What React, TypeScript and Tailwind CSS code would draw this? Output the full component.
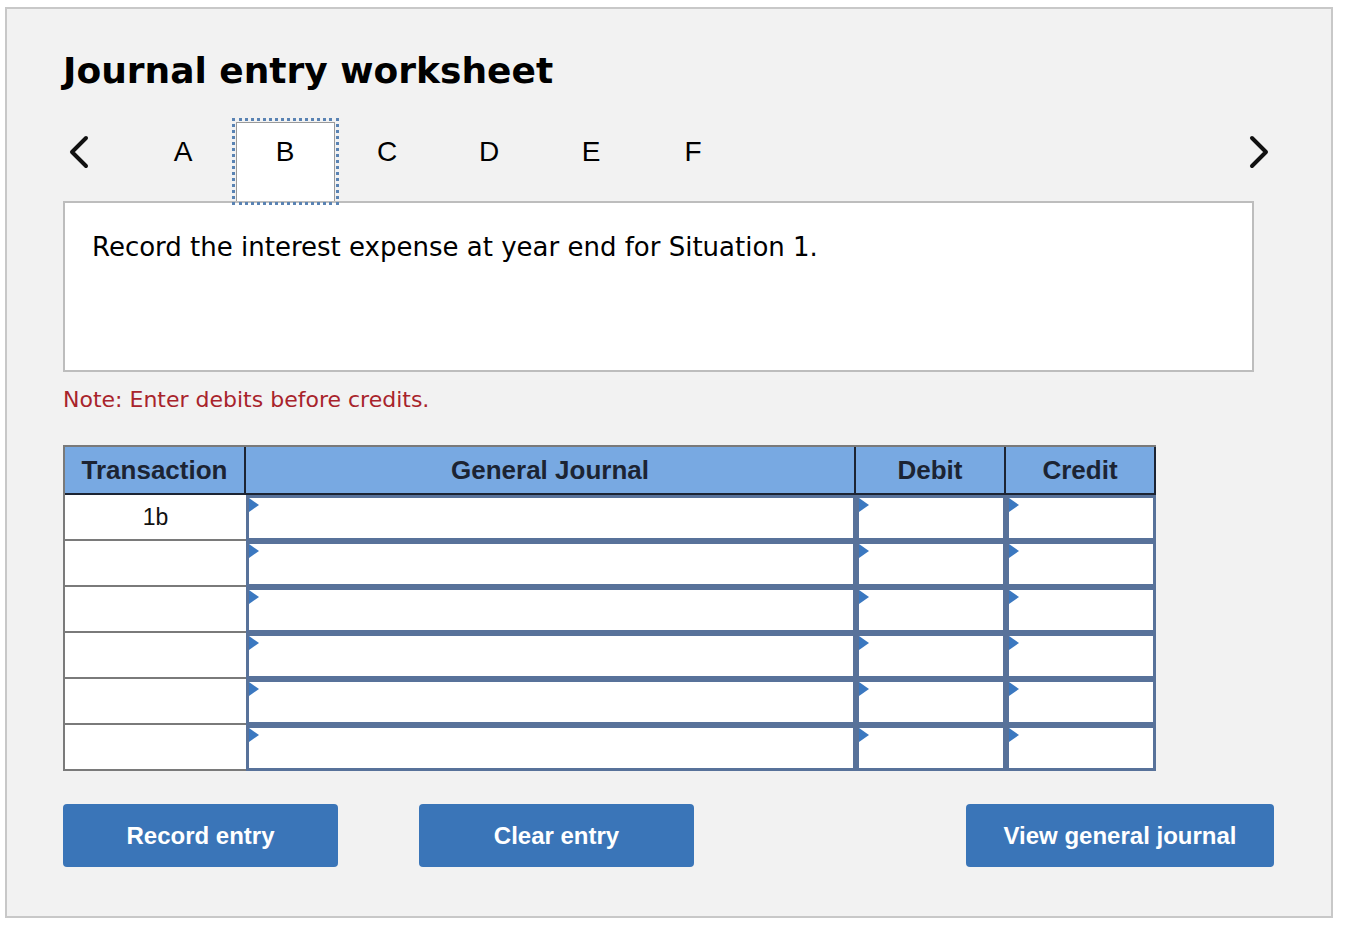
import React from 'react';

const tabs = ['A', 'B', 'C', 'D', 'E', 'F'];
const rows = ['1b', '', '', '', '', ''];

const Chevron: React.FC<{ dir: 'left' | 'right' }> = ({ dir }) => (
  <svg width="22" height="34" viewBox="0 0 22 34" fill="none">
    <polyline
      points={dir === 'left' ? '18,3 4,17 18,31' : '4,3 18,17 4,31'}
      stroke="#111"
      strokeWidth="4"
      strokeLinecap="round"
      strokeLinejoin="round"
    />
  </svg>
);

const InputCell: React.FC<{ w: string }> = ({ w }) => (
  <div className={`relative ${w} h-full border-[3px] border-[#58729a] bg-white`}>
    <svg className="absolute left-0 top-0" width="11" height="16" viewBox="0 0 11 16">
      <polygon points="0,0 10,7 0,14" fill="#3b78c0" />
    </svg>
  </div>
);

export default function App() {
  return (
    <div className="w-full h-[934px] bg-white pt-[7px] pl-[5px]">
      <div className="w-[1328px] h-[911px] border-2 border-[#c8c8c8] bg-[#f2f2f2] px-[56px]">
        <h1 className="pt-[40px] text-[36px] leading-[44px] font-bold text-black font-['DejaVu_Sans',sans-serif]">
          Journal entry worksheet
        </h1>

        {/* tab strip */}
        <div className="mt-[25px] flex items-start h-[87px] relative z-10 -mb-[4px]">
          <div className="w-[69px] h-[68px] flex items-center pl-[5px]">
            <Chevron dir="left" />
          </div>
          {tabs.map((t) => (
            <div key={t} className="w-[102px] flex justify-center">
              {t === 'B' ? (
                <div className="shrink-0 w-[107px] h-[87px] border-[3px] border-dotted border-[#5a83b3] p-px flex">
                  <div className="flex-1 bg-white border border-[#9a9a9a] border-b-0 flex justify-center pt-[13px] text-[28px] leading-[32px] text-black font-['Liberation_Sans',Arial,sans-serif]">
                    {t}
                  </div>
                </div>
              ) : (
                <span className="h-[68px] flex items-center text-[28px] leading-[32px] text-black font-['Liberation_Sans',Arial,sans-serif]">
                  {t}
                </span>
              )}
            </div>
          ))}
          <div className="flex-1 h-[68px] flex items-center justify-end pr-[5px]">
            <Chevron dir="right" />
          </div>
        </div>

        <div className="w-[1191px] h-[171px] border-2 border-[#bdbdbd] bg-white px-[27px] pt-[28px]">
          <p className="text-[26px] leading-[32px] text-black font-['DejaVu_Sans',sans-serif]">
            Record the interest expense at year end for Situation 1.
          </p>
        </div>

        <p className="mt-[14px] text-[22px] leading-[28px] text-[#a8232b] font-['DejaVu_Sans',sans-serif]">
          Note: Enter debits before credits.
        </p>

        {/* journal table */}
        <div className="mt-[31px] w-[1093px] font-['Liberation_Sans',Arial,sans-serif]">
          <div className="flex h-[50px] bg-[#78a9e2] border-t-2 border-l-2 border-[#7a7a7a] text-[26px] font-bold text-[#1c2433]">
            <div className="w-[181px] flex items-center justify-center border-r-2 border-b-2 border-[#1c2433]">Transaction</div>
            <div className="w-[610px] flex items-center justify-center border-r-2 border-b-2 border-[#1c2433]">General Journal</div>
            <div className="w-[150px] flex items-center justify-center border-r-2 border-b-2 border-[#1c2433]">Debit</div>
            <div className="w-[150px] flex items-center justify-center border-r-2 border-b-2 border-[#1c2433]">Credit</div>
          </div>
          {rows.map((r, i) => (
            <div key={i} className="flex h-[46px]">
              <div className="w-[183px] h-full bg-white border-l-2 border-b-2 border-[#7a7a7a] flex items-center justify-center text-[23px] text-[#111]">
                {r}
              </div>
              <InputCell w="w-[610px]" />
              <InputCell w="w-[150px]" />
              <InputCell w="w-[150px]" />
            </div>
          ))}
        </div>

        <div className="mt-[33px] w-[1211px] flex justify-between font-['Liberation_Sans',Arial,sans-serif]">
          <div className="flex gap-[81px]">
            <button className="w-[275px] h-[63px] rounded-[4px] bg-[#3a75b8] text-white text-[24px] font-bold">Record entry</button>
            <button className="w-[275px] h-[63px] rounded-[4px] bg-[#3a75b8] text-white text-[24px] font-bold">Clear entry</button>
          </div>
          <button className="w-[308px] h-[63px] rounded-[4px] bg-[#3a75b8] text-white text-[24px] font-bold">View general journal</button>
        </div>
      </div>
    </div>
  );
}
